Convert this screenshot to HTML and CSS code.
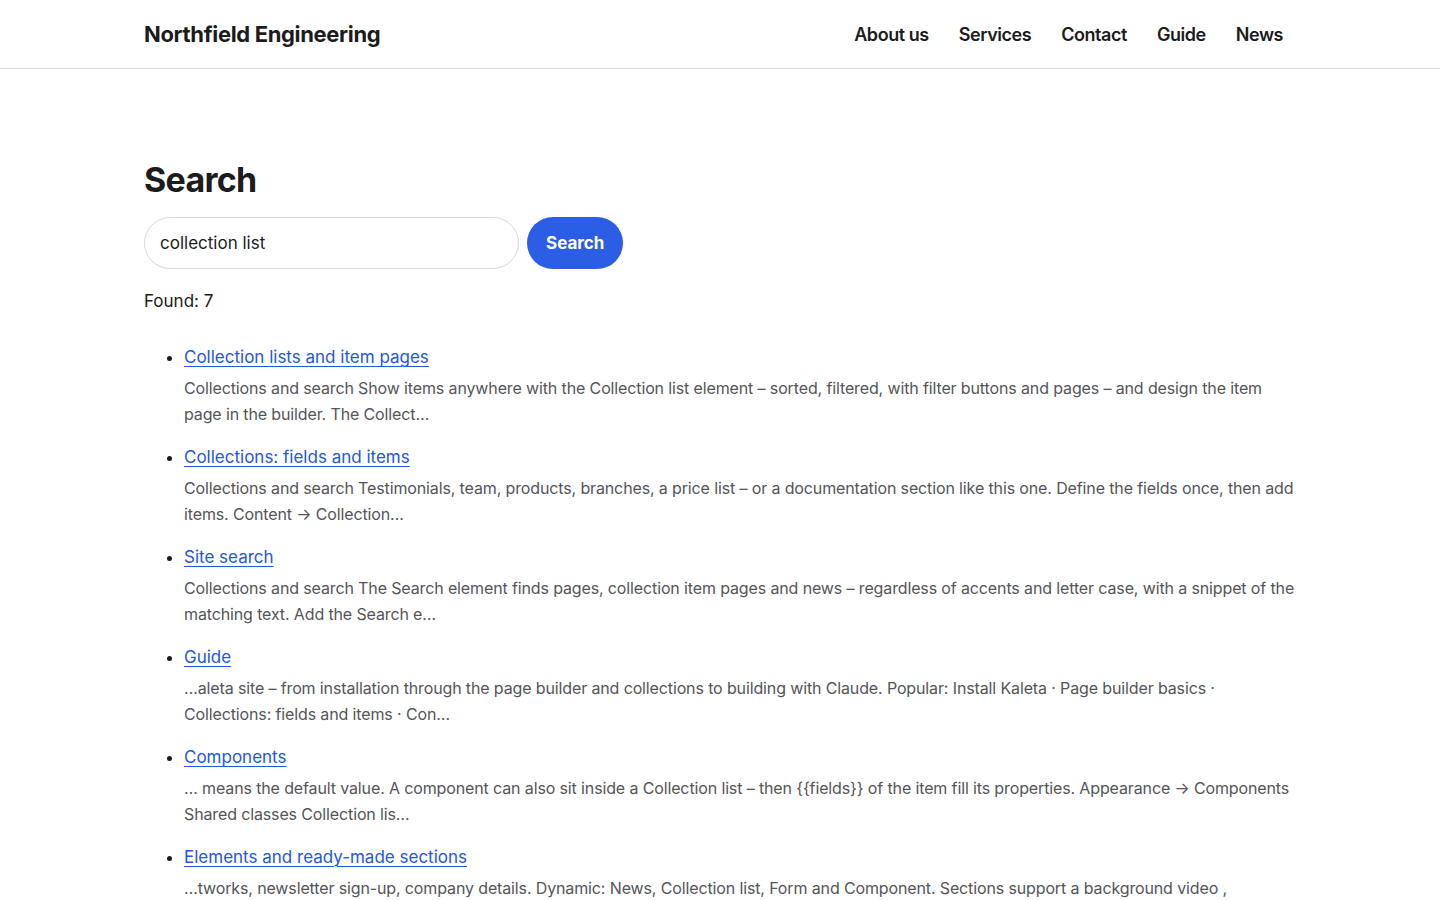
FILE: index.html
```html
<!DOCTYPE html>
<html lang="en">
<head>
<meta charset="utf-8">
<title>Search – Northfield Engineering</title>
<link rel="stylesheet" href="styles.css">
</head>
<body>
<header class="site-header">
  <div class="container header-inner">
    <a class="brand" href="#">Northfield Engineering</a>
    <nav class="nav">
      <a href="#">About us</a>
      <a href="#">Services</a>
      <a href="#">Contact</a>
      <a href="#">Guide</a>
      <a href="#">News</a>
    </nav>
  </div>
</header>
<main class="container main">
  <h1 class="title">Search</h1>
  <form class="search-form">
    <input class="search-input" type="text" value="collection list">
    <button class="search-btn" type="button">Search</button>
  </form>
  <p class="found">Found: 7</p>
  <ul class="results">
    <li class="result">
      <a class="result-title" href="#">Collection lists and item pages</a>
      <p class="snippet">Collections and search Show items anywhere with the Collection list element – sorted, filtered, with filter buttons and pages – and design the item page in the builder. The Collect…</p>
    </li>
    <li class="result">
      <a class="result-title" href="#">Collections: fields and items</a>
      <p class="snippet">Collections and search Testimonials, team, products, branches, a price list – or a documentation section like this one. Define the fields once, then add items. Content → Collection…</p>
    </li>
    <li class="result">
      <a class="result-title" href="#">Site search</a>
      <p class="snippet">Collections and search The Search element finds pages, collection item pages and news – regardless of accents and letter case, with a snippet of the matching text. Add the Search e…</p>
    </li>
    <li class="result">
      <a class="result-title" href="#">Guide</a>
      <p class="snippet">…aleta site – from installation through the page builder and collections to building with Claude. Popular: Install Kaleta · Page builder basics · Collections: fields and items · Con…</p>
    </li>
    <li class="result">
      <a class="result-title" href="#">Components</a>
      <p class="snippet">… means the default value. A component can also sit inside a Collection list – then {{fields}} of the item fill its properties. Appearance → Components Shared classes Collection lis…</p>
    </li>
    <li class="result">
      <a class="result-title" href="#">Elements and ready-made sections</a>
      <p class="snippet">…tworks, newsletter sign-up, company details. Dynamic: News, Collection list, Form and Component. Sections support a background video , animations and more…</p>
    </li>
    <li class="result">
      <a class="result-title" href="#">Kaleta site</a>
      <p class="snippet">…collections, collection list and search…</p>
    </li>
  </ul>
</main>
</body>
</html>
```

FILE: styles.css
```css
* { box-sizing: border-box; }

html, body {
  margin: 0;
  padding: 0;
  background: #ffffff;
  color: #1b1b20;
  font-family: "Inter", "Noto Sans", "Liberation Sans", sans-serif;
}

.container {
  max-width: 1152px;
  margin: 0 auto;
}

.site-header {
  border-bottom: 1px solid #dcdcdc;
}

.header-inner {
  height: 68px;
  display: flex;
  align-items: center;
  justify-content: space-between;
}

.brand {
  font-size: 22px;
  font-weight: 700;
  color: #1b1b20;
  text-decoration: none;
  letter-spacing: -0.35px;
}

.nav {
  display: flex;
  align-items: center;
  gap: 2px;
  margin-right: -1px;
}

.nav a {
  padding: 8px 14px;
  font-size: 18px;
  font-weight: 600;
  color: #1b1b20;
  text-decoration: none;
  letter-spacing: -0.45px;
}

.main {
  padding-top: 89px;
}

.title {
  margin: 0 0 15px;
  font-size: 34px;
  line-height: 44px;
  font-weight: 700;
  letter-spacing: -0.7px;
  color: #1b1b20;
}

.search-form {
  display: flex;
  gap: 8px;
  margin: 0;
}

.search-input {
  width: 375px;
  height: 52px;
  padding: 0 15px;
  border: 1px solid #d9d9d9;
  border-radius: 999px;
  font-family: inherit;
  font-size: 17px;
  color: #1b1b20;
  background: #fff;
  outline: none;
}

.search-btn {
  height: 52px;
  padding: 0 19px;
  border: none;
  border-radius: 999px;
  background: #2c5de5;
  color: #ffffff;
  font-family: inherit;
  font-size: 17px;
  font-weight: 700;
  cursor: pointer;
}

.found {
  margin: 19px 0 0;
  font-size: 17px;
  line-height: 26px;
}

.results {
  margin: 29px 0 0;
  padding-left: 40px;
}

.result {
  margin-bottom: 16px;
}

.result-title {
  display: inline-block;
  font-size: 17px;
  line-height: 28px;
  color: #2456e0;
  text-decoration: underline;
  text-underline-offset: 3px;
  text-decoration-thickness: 1px;
}

.snippet {
  margin: 4px 0 0;
  font-size: 16px;
  line-height: 26px;
  color: #555558;
  letter-spacing: -0.13px;
}
```
